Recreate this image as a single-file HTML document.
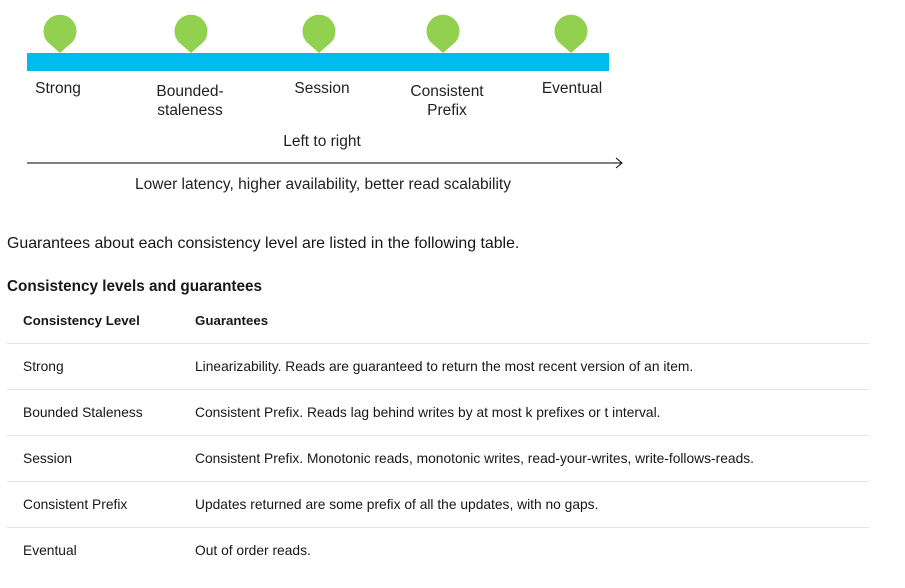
<!DOCTYPE html>
<html><head><meta charset="utf-8"><style>
body{margin:0;width:905px;height:588px;background:#fff;font-family:"Liberation Sans",sans-serif;color:#171717;position:relative;overflow:hidden}
.a{position:absolute;white-space:nowrap}
.c{transform:translateX(-50%);text-align:center;line-height:19px;font-size:15.5px;color:#222}
.t{font-size:13.8px}
.h{font-size:13.3px;font-weight:bold}
.hr{position:absolute;left:7px;width:862px;height:1px;background:#e3e3e3}
</style></head><body>
<svg class="a" style="left:0;top:0" width="640" height="175">
<rect x="27" y="53" width="582" height="18" fill="#00bbf0"/>
<g fill="#92d050">
<path id="p" d="M47.5 42a16.5 16.5 0 1 1 25 0l-12.5 11z"/>
<use href="#p" x="131"/><use href="#p" x="259"/><use href="#p" x="383"/><use href="#p" x="511"/>
</g>
<line x1="27" y1="163" x2="621" y2="163" stroke="#000" stroke-width="1"/>
<path d="M616 158l6 5l-6 5" fill="none" stroke="#000"/>
</svg>
<div class="a c" style="left:58px;top:79px">Strong</div>
<div class="a c" style="left:190px;top:82px">Bounded-<br>staleness</div>
<div class="a c" style="left:322px;top:79px">Session</div>
<div class="a c" style="left:447px;top:82px">Consistent<br>Prefix</div>
<div class="a c" style="left:572px;top:79px">Eventual</div>
<div class="a c" style="left:322px;top:132px">Left to right</div>
<div class="a c" style="left:323px;top:175px">Lower latency, higher availability, better read scalability</div>
<div class="a" style="left:7px;top:235px;font-size:15.9px">Guarantees about each consistency level are listed in the following table.</div>
<div class="a" style="left:7px;top:278px;font-size:15.3px;font-weight:bold">Consistency levels and guarantees</div>
<div class="a h" style="left:23px;top:313px">Consistency Level</div>
<div class="a h" style="left:195px;top:313px">Guarantees</div>
<div class="hr" style="top:343px"></div>
<div class="a t" style="left:23px;top:359px">Strong</div>
<div class="a t" style="left:195px;top:359px">Linearizability. Reads are guaranteed to return the most recent version of an item.</div>
<div class="hr" style="top:389px"></div>
<div class="a t" style="left:23px;top:405px">Bounded Staleness</div>
<div class="a t" style="left:195px;top:405px">Consistent Prefix. Reads lag behind writes by at most k prefixes or t interval.</div>
<div class="hr" style="top:435px"></div>
<div class="a t" style="left:23px;top:451px">Session</div>
<div class="a t" style="left:195px;top:451px">Consistent Prefix. Monotonic reads, monotonic writes, read-your-writes, write-follows-reads.</div>
<div class="hr" style="top:481px"></div>
<div class="a t" style="left:23px;top:497px">Consistent Prefix</div>
<div class="a t" style="left:195px;top:497px">Updates returned are some prefix of all the updates, with no gaps.</div>
<div class="hr" style="top:527px"></div>
<div class="a t" style="left:23px;top:543px">Eventual</div>
<div class="a t" style="left:195px;top:543px">Out of order reads.</div>
</body></html>
